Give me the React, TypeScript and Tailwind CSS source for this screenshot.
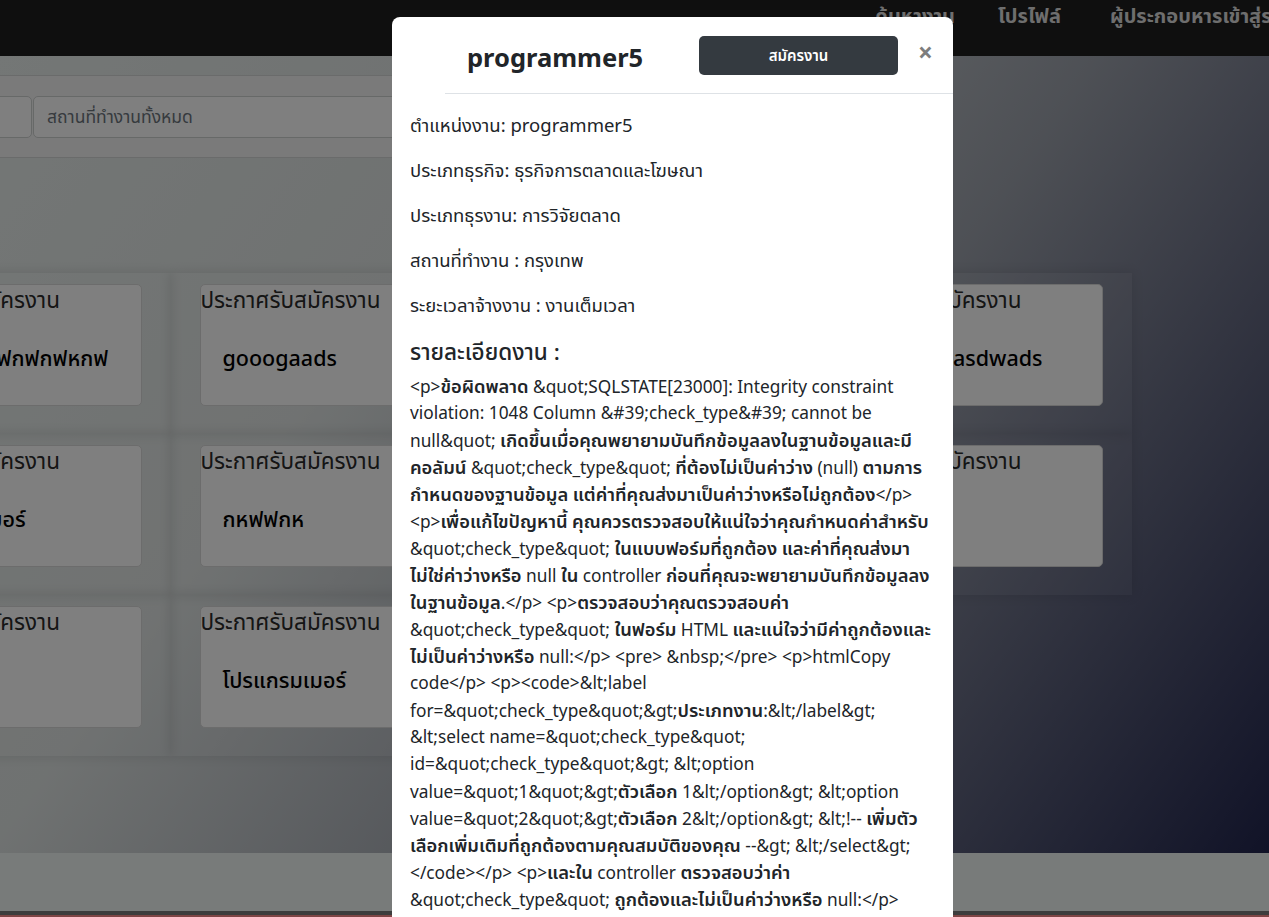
import React from 'react'

const cells: { title: string }[][] = [
  [{ title: 'กฟหกฟหกฟกฟกฟหกฟ' }, { title: 'gooogaads' }, { title: 'frontend' }, { title: 'asdwadsasdwads' }],
  [{ title: 'โปรแกรมเมอร์' }, { title: 'กหฟฟกห' }, { title: 'designer' }, { title: '' }],
  [{ title: '' }, { title: 'โปรแกรมเมอร์' }],
]

const fields = [
  'ตำแหน่งงาน: programmer5',
  'ประเภทธุรกิจ: ธุรกิจการตลาดและโฆษณา',
  'ประเภทธุรงาน: การวิจัยตลาด',
  'สถานที่ทำงาน : กรุงเทพ',
  'ระยะเวลาจ้างงาน : งานเต็มเวลา',
]

const detail = [
  '<p>ข้อผิดพลาด &quot;SQLSTATE[23000]: Integrity constraint',
  'violation: 1048 Column &#39;check_type&#39; cannot be',
  'null&quot; เกิดขึ้นเมื่อคุณพยายามบันทึกข้อมูลลงในฐานข้อมูลและมี',
  'คอลัมน์ &quot;check_type&quot; ที่ต้องไม่เป็นค่าว่าง (null) ตามการ',
  'กำหนดของฐานข้อมูล แต่ค่าที่คุณส่งมาเป็นค่าว่างหรือไม่ถูกต้อง</p>',
  '<p>เพื่อแก้ไขปัญหานี้ คุณควรตรวจสอบให้แน่ใจว่าคุณกำหนดค่าสำหรับ',
  '&quot;check_type&quot; ในแบบฟอร์มที่ถูกต้อง และค่าที่คุณส่งมา',
  'ไม่ใช่ค่าว่างหรือ null ใน controller ก่อนที่คุณจะพยายามบันทึกข้อมูลลง',
  'ในฐานข้อมูล.</p> <p>ตรวจสอบว่าคุณตรวจสอบค่า',
  '&quot;check_type&quot; ในฟอร์ม HTML และแน่ใจว่ามีค่าถูกต้องและ',
  'ไม่เป็นค่าว่างหรือ null:</p> <pre> &nbsp;</pre> <p>htmlCopy',
  'code</p> <p><code>&lt;label',
  'for=&quot;check_type&quot;&gt;ประเภทงาน:&lt;/label&gt;',
  '&lt;select name=&quot;check_type&quot;',
  'id=&quot;check_type&quot;&gt; &lt;option',
  'value=&quot;1&quot;&gt;ตัวเลือก 1&lt;/option&gt; &lt;option',
  'value=&quot;2&quot;&gt;ตัวเลือก 2&lt;/option&gt; &lt;!-- เพิ่มตัว',
  'เลือกเพิ่มเติมที่ถูกต้องตามคุณสมบัติของคุณ --&gt; &lt;/select&gt;',
  '</code></p> <p>และใน controller ตรวจสอบว่าค่า',
  '&quot;check_type&quot; ถูกต้องและไม่เป็นค่าว่างหรือ null:</p>',
]

// thai runs look heavier and a little wider than latin in the detail block
function Mixed({ text }: { text: string }) {
  return (
    <>
      {text.split(/([\u0E00-\u0E7F]+)/).map((part, i) =>
        /[\u0E00-\u0E7F]/.test(part) ? (
          <span key={i} className="text-[1.06em] font-semibold">{part}</span>
        ) : (
          <React.Fragment key={i}>{part}</React.Fragment>
        ),
      )}
    </>
  )
}

function JobCard({ title }: { title: string }) {
  return (
    <div className="h-[122px] overflow-hidden whitespace-nowrap rounded-[5px] border border-[#d8d8d8] bg-white">
      <p className="text-[22.5px] leading-[30px] text-[#2a2a2a]">ประกาศรับสมัครงาน</p>
      {title && <p className="mt-[28px] pl-[22px] text-[21.5px] font-medium leading-[30px] text-black">{title}</p>}
    </div>
  )
}

export default function App() {
  return (
    <div className="relative h-[917px] w-full overflow-hidden font-['Noto_Sans','Noto_Sans_Thai',sans-serif] text-[#212529]">
      <nav className="flex h-[56px] items-start whitespace-nowrap bg-[#1f1f1f] pl-[875px] pt-[3px] text-[20px] font-bold leading-[26px] text-[#dcdcdc]">
        <span className="w-[123px] shrink-0">ค้นหางาน</span>
        <span className="w-[112px] shrink-0">โปรไฟล์</span>
        <span className="shrink-0">ผู้ประกอบหารเข้าสู่ระบบ</span>
      </nav>

      <main className="h-[797px] bg-[linear-gradient(125deg,#e8eeec_0%,#dfe4e3_30%,#9ca1ab_60%,#22264f_100%)] pt-[19px]">
        <div className="-ml-[150px] flex h-[83px] w-[1080px] items-center gap-px border-y border-[#d4d7d6] bg-[#f4f5f5] px-[20px]">
          <div className="h-[42px] w-[162px] rounded-[5px] border border-[#cfd2d1] bg-white" />
          <div className="flex h-[42px] flex-1 items-center rounded-[5px] border border-[#cfd2d1] bg-white px-[13px] text-[17.5px] text-[#6c757d]">
            สถานที่ทำงานทั้งหมด
          </div>
        </div>

        <div className="-ml-[150px] mt-[115px] w-[1282px]">
          {cells.map((row, r) => (
            <div key={r} className="flex">
              {row.map((c, i) => (
                <div key={i} className="h-[161px] w-[320.5px] bg-white/5 px-[29px] pt-[11px] shadow-[0_0_12px_rgba(0,0,0,0.12)]">
                  <JobCard title={c.title} />
                </div>
              ))}
            </div>
          ))}
        </div>
      </main>

      <footer className="h-[58px] bg-[#f0f6f4]" />
      <div className="h-[6px] border-b-2 border-[#ff8a8a] bg-[#7a7a7a]" />

      <div className="absolute inset-0 bg-black/50" />

      <div className="absolute left-[392px] top-[17px] h-[940px] w-[561px] overflow-hidden rounded-t-[8px] bg-white">
        <div className="ml-[53px] flex h-[77px] items-center border-b border-[#dee2e6] pl-[22px]">
          <h2 className="mt-[5px] w-[232px] text-[25.5px] font-bold text-[#212529]">programmer5</h2>
          <button className="h-[39px] w-[199px] rounded-[5px] bg-[#343a40] text-[15px] font-semibold text-white">
            สมัครงาน
          </button>
          <span className="mb-[6px] ml-[20px] text-[26px] font-bold leading-none text-[#7d7d7d]">×</span>
        </div>

        <div className="whitespace-nowrap pl-[18px] pt-[19px]">
          {fields.map(f => (
            <p key={f} className="mb-[21px] text-[18.5px] leading-[24px]">{f}</p>
          ))}
          <h3 className="mb-[6px] text-[22.5px] font-medium leading-[28px]">รายละเอียดงาน :</h3>
          <div className="text-[17.3px] leading-[27px]">
            {detail.map((line, i) => (
              <div key={i} className="h-[27px]">
                <Mixed text={line} />
              </div>
            ))}
          </div>
        </div>
      </div>
    </div>
  )
}
